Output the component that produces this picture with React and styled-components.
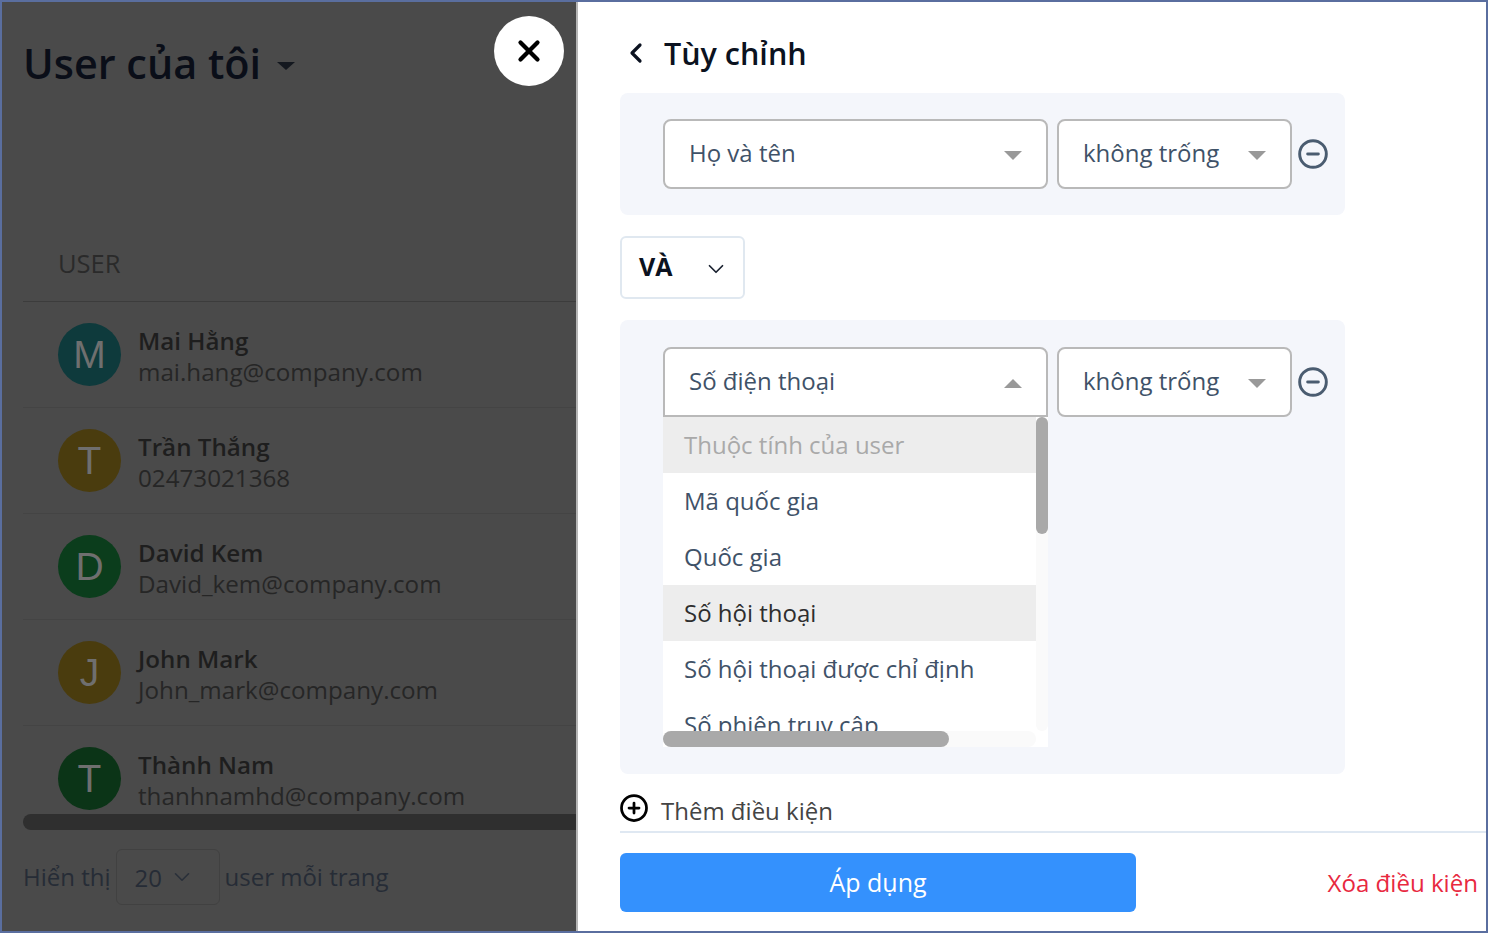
import styled, { createGlobalStyle } from "styled-components";
import { ChevronDown, ChevronLeft, CircleMinus, CirclePlus, X } from "lucide-react";

const users = [
  { name: "Mai Hằng", info: "mai.hang@company.com", letter: "M", color: "#0e3a3c" },
  { name: "Trần Thắng", info: "02473021368", letter: "T", color: "#4a3c0e" },
  { name: "David Kem", info: "David_kem@company.com", letter: "D", color: "#0b3d1c" },
  { name: "John Mark", info: "John_mark@company.com", letter: "J", color: "#4a3c0e" },
  { name: "Thành Nam", info: "thanhnamhd@company.com", letter: "T", color: "#0b3417" },
];

const options = [
  { label: "Thuộc tính của user", kind: "header" },
  { label: "Mã quốc gia" },
  { label: "Quốc gia" },
  { label: "Số hội thoại", kind: "active" },
  { label: "Số hội thoại được chỉ định" },
  { label: "Số phiên truy cập" },
];

export default function App() {
  return (
    <>
      <GlobalStyle />
      <Page>
        <Backdrop>
          <PageTitle>
            User của tôi
            <TitleCaret />
          </PageTitle>
          <ColumnLabel>USER</ColumnLabel>
          <UserList>
            {users.map((user) => (
              <UserRow key={user.name}>
                <Avatar $color={user.color}>{user.letter}</Avatar>
                <UserText>
                  <UserName>{user.name}</UserName>
                  <UserInfo>{user.info}</UserInfo>
                </UserText>
              </UserRow>
            ))}
          </UserList>
          <TableScrollbar />
          <Pager>
            <PagerLabel>Hiển thị</PagerLabel>
            <PageSize>
              20 <ChevronDown size={26} strokeWidth={1.5} color="#2a303a" />
            </PageSize>
            <PagerLabel>user mỗi trang</PagerLabel>
          </Pager>
          <CloseButton>
            <X size={34} strokeWidth={3} color="#000" />
          </CloseButton>
        </Backdrop>

        <Panel>
          <PanelHeader>
            <ChevronLeft size={32} strokeWidth={2.4} color="#0b1220" />
            <PanelTitle>Tùy chỉnh</PanelTitle>
          </PanelHeader>

          <FilterCard $height={122} $top={26}>
            <FilterRow>
              <FieldSelect $width={385}>
                Họ và tên
                <Triangle />
              </FieldSelect>
              <FieldSelect $width={235}>
                không trống
                <Triangle />
              </FieldSelect>
              <RemoveIcon size={32} strokeWidth={2.2} color="#4a5c70" />
            </FilterRow>
          </FilterCard>

          <JoinSelect>
            VÀ <JoinChevron size={26} strokeWidth={1.6} color="#1a2230" />
          </JoinSelect>

          <FilterCard $height={454} $top={27}>
            <FilterRow>
              <FieldSelect $width={385} $open>
                Số điện thoại
                <Triangle $up />
              </FieldSelect>
              <FieldSelect $width={235}>
                không trống
                <Triangle />
              </FieldSelect>
              <RemoveIcon size={32} strokeWidth={2.2} color="#4a5c70" />
            </FilterRow>
            <Dropdown>
              <OptionList>
                {options.map((option) => (
                  <Option key={option.label} $kind={option.kind}>
                    {option.label}
                  </Option>
                ))}
              </OptionList>
              <VerticalTrack>
                <VerticalThumb />
              </VerticalTrack>
              <HorizontalTrack>
                <HorizontalThumb />
              </HorizontalTrack>
            </Dropdown>
          </FilterCard>

          <AddCondition>
            <AddIcon size={30} strokeWidth={2.2} color="#000" />
            Thêm điều kiện
          </AddCondition>

          <PanelFooter>
            <ApplyButton>Áp dụng</ApplyButton>
            <ClearLink>Xóa điều kiện</ClearLink>
          </PanelFooter>
        </Panel>
      </Page>
    </>
  );
}

const GlobalStyle = createGlobalStyle`
  * {
    box-sizing: border-box;
  }
  body {
    margin: 0;
    font-family: "Open Sans", "Noto Sans", sans-serif;
  }
`;

const Page = styled.div`
  display: flex;
  width: 1488px;
  height: 933px;
  overflow: hidden;
  border: 2px solid #5a6e9f;
`;

const Backdrop = styled.div`
  position: relative;
  flex: 0 0 576px;
  padding-left: 21px;
  background: #4a4a4a;
  border-right: 2px solid #b5b5b5;
  overflow: hidden;
`;

const PageTitle = styled.h1`
  display: flex;
  align-items: center;
  gap: 16px;
  height: 48px;
  margin: 37px 0 0;
  font-size: 41.4px;
  font-weight: 600;
  color: #0a0e18;
  white-space: pre;
`;

const TitleCaret = styled.i`
  margin-top: 6px;
  border-style: solid;
  border-width: 8px 9px 0;
  border-color: #14181f transparent transparent;
`;

const ColumnLabel = styled.div`
  height: 215px;
  padding: 159px 0 0 35px;
  font-size: 25.5px;
  color: #2a2a2a;
  border-bottom: 1px solid #3c3c3c;
`;

const UserList = styled.div`
  height: 512px;
  overflow: hidden;
`;

const UserRow = styled.div`
  display: flex;
  align-items: center;
  gap: 17px;
  height: 106px;
  padding-left: 35px;
  border-bottom: 1px solid #444;
`;

const Avatar = styled.div`
  display: flex;
  align-items: center;
  justify-content: center;
  width: 63px;
  height: 63px;
  border-radius: 50%;
  background: ${(props) => props.$color};
  font-family: "Liberation Sans", sans-serif;
  font-size: 39px;
  color: #6f6f6f;
`;

const UserText = styled.div`
  margin-top: 2px;
`;

const UserName = styled.div`
  font-size: 24.2px;
  line-height: 31px;
  font-weight: 600;
  color: #1e1e1e;
`;

const UserInfo = styled.div`
  font-size: 24.2px;
  line-height: 31px;
  color: #262626;
`;

const TableScrollbar = styled.div`
  height: 16px;
  border-radius: 8px 0 0 8px;
  background: #2f2f2f;
`;

const Pager = styled.div`
  display: flex;
  align-items: center;
  gap: 5px;
  margin-top: 19px;
  font-size: 24px;
  color: #262c36;
`;

const PagerLabel = styled.span`
  margin-top: -2px;
`;

const PageSize = styled.div`
  display: flex;
  align-items: center;
  gap: 7px;
  width: 104px;
  height: 56px;
  padding-left: 18px;
  border: 1.5px solid #414141;
  border-radius: 6px;
`;

const CloseButton = styled.button`
  position: absolute;
  top: 14px;
  left: 492px;
  display: flex;
  align-items: center;
  justify-content: center;
  width: 70px;
  height: 70px;
  padding: 0;
  border: none;
  border-radius: 50%;
  background: #fff;
`;

const Panel = styled.div`
  flex: 1;
  display: flex;
  flex-direction: column;
  padding-left: 42px;
  background: #fff;
  min-width: 0;
`;

const PanelHeader = styled.div`
  display: flex;
  align-items: center;
  gap: 12px;
  height: 91px;
  padding: 10px 0 0;
`;

const PanelTitle = styled.h2`
  margin: 0;
  font-size: 30.5px;
  font-weight: 600;
  color: #0b1220;
`;

const FilterCard = styled.div`
  width: 725px;
  height: ${(props) => props.$height}px;
  flex: none;
  padding: ${(props) => props.$top}px 0 0 43px;
  border-radius: 8px;
  background: #f4f6fb;
`;

const FilterRow = styled.div`
  display: flex;
  align-items: center;
  gap: 9px;
`;

const RemoveIcon = styled(CircleMinus)`
  margin-left: -4px;
`;

const FieldSelect = styled.div`
  display: flex;
  align-items: center;
  justify-content: space-between;
  width: ${(props) => props.$width}px;
  height: 70px;
  padding: 0 24px 3px 24px;
  background: #fff;
  border: 2px solid #b9b9b9;
  border-radius: ${(props) => (props.$open ? "8px 8px 0 0" : "8px")};
  font-size: 24px;
  color: #3f5268;
`;

const Triangle = styled.i`
  margin-top: 5px;
  border-style: solid;
  border-width: ${(props) => (props.$up ? "0 9px 9px" : "9px 9px 0")};
  border-color: ${(props) =>
    props.$up
      ? "transparent transparent #999"
      : "#999 transparent transparent"};
`;

const JoinSelect = styled.div`
  display: flex;
  align-items: center;
  justify-content: space-between;
  width: 125px;
  height: 63px;
  margin: 21px 0;
  padding: 0 14px 3px 17px;
  flex: none;
  background: #fff;
  border: 2px solid #e0e8f0;
  border-radius: 6px;
  font-size: 25px;
  font-weight: 700;
  color: #0b1220;
`;

const JoinChevron = styled(ChevronDown)`
  margin-top: 6px;
`;

const Dropdown = styled.div`
  display: grid;
  grid-template-columns: 373px 12px;
  grid-template-rows: 314px 16px;
  width: 385px;
  background: #fff;
`;

const OptionList = styled.div`
  overflow: hidden;
`;

const Option = styled.div`
  display: flex;
  align-items: center;
  height: 56px;
  padding: 0 0 2px 21px;
  font-size: 24px;
  white-space: nowrap;
  color: ${(props) =>
    props.$kind === "header"
      ? "#a9a9a9"
      : props.$kind === "active"
        ? "#2e2e2e"
        : "#3f5268"};
  background: ${(props) => (props.$kind ? "#ededed" : "#fff")};
`;

const VerticalTrack = styled.div`
  grid-row: 1;
  grid-column: 2;
  border-radius: 6px;
  background: #fafafa;
`;

const VerticalThumb = styled.div`
  width: 12px;
  height: 117px;
  border-radius: 6px;
  background: #a9a9a9;
`;

const HorizontalTrack = styled.div`
  grid-row: 2;
  grid-column: 1;
  border-radius: 8px;
  background: #fafafa;
`;

const HorizontalThumb = styled.div`
  width: 286px;
  height: 16px;
  border-radius: 8px;
  background: #a9a9a9;
`;

const AddCondition = styled.div`
  display: flex;
  align-items: center;
  gap: 12px;
  height: 59px;
  flex: none;
  padding-top: 16px;
  border-bottom: 2px solid #dfe8f2;
  font-size: 24px;
  color: #444;
`;

const AddIcon = styled(CirclePlus)`
  margin: -5px 0 0 -1px;
`;

const PanelFooter = styled.div`
  display: flex;
  align-items: center;
  justify-content: space-between;
  padding: 20px 8px 0 0;
`;

const ApplyButton = styled.button`
  width: 516px;
  height: 59px;
  padding: 0 0 2px;
  border: none;
  border-radius: 6px;
  background: #3491fd;
  font-family: inherit;
  font-size: 25px;
  color: #fff;
`;

const ClearLink = styled.span`
  font-size: 24.1px;
  color: #e8293f;
`;
